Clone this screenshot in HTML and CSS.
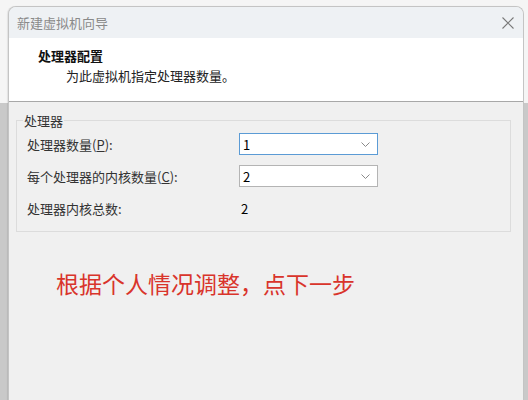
FILE: index.html
```html
<!DOCTYPE html>
<html lang="zh-CN">
<head>
<meta charset="utf-8">
<link rel="stylesheet" href="styles.css">
</head>
<body>
<div class="window">
  <div class="titlebar">
    <span class="title">新建虚拟机向导</span>
    <svg class="close" width="12" height="12" viewBox="0 0 12 12"><path d="M0.5 0.5L11.5 11.5M11.5 0.5L0.5 11.5" stroke="#7a7a7a" stroke-width="1.1" fill="none"/></svg>
  </div>
  <div class="header">
    <div class="h-title">处理器配置</div>
    <div class="h-sub">为此虚拟机指定处理器数量。</div>
  </div>
  <div class="content">
    <fieldset class="group">
      <legend>处理器</legend>
      <div class="row">
        <label class="lbl">处理器数量(<u>P</u>):</label>
        <div class="combo focus"><span>1</span><svg width="9" height="5" viewBox="0 0 9 5"><path d="M0.5 0.5L4.5 4.5L8.5 0.5" stroke="#8a8a8a" fill="none"/></svg></div>
      </div>
      <div class="row">
        <label class="lbl">每个处理器的内核数量(<u>C</u>):</label>
        <div class="combo"><span>2</span><svg width="9" height="5" viewBox="0 0 9 5"><path d="M0.5 0.5L4.5 4.5L8.5 0.5" stroke="#8a8a8a" fill="none"/></svg></div>
      </div>
      <div class="row total">
        <span class="lbl">处理器内核总数:</span>
        <span class="val">2</span>
      </div>
    </fieldset>
    <p class="note">根据个人情况调整，点下一步</p>
  </div>
</div>
</body>
</html>
```
FILE: styles.css
```css
html, body { margin: 0; padding: 0; }
body {
  width: 528px;
  height: 400px;
  overflow: hidden;
  background: linear-gradient(#f5f5f5 0 103px, #c9c9c9 103px);
  font-family: "Noto Sans CJK SC", "Noto Sans", sans-serif;
  padding: 6px 4px 0 8px;
  box-sizing: border-box;
}
.window {
  width: 516px;
  height: 400px;
  box-sizing: border-box;
  border: 1px solid #c4c4c4;
  border-bottom: none;
  border-radius: 8px 8px 0 0;
  background: #f0f0f0;
  overflow: hidden;
  box-shadow: -1px 0 1px rgba(0,0,0,0.08);
}
.titlebar {
  height: 31px;
  background: #eef1f4;
  display: flex;
  align-items: center;
  justify-content: space-between;
  padding: 0 9px 0 8px;
}
.title { font-size: 13px; color: #8a8a8a; line-height: 1; }
.close { margin-top: 1px; }
.header {
  height: 64px;
  background: #ffffff;
  border-bottom: 1px solid #a8a8a8;
  padding: 9px 0 0 29px;
  box-sizing: border-box;
}
.h-title { font-size: 13px; font-weight: bold; color: #111; line-height: 17px; }
.h-sub { font-size: 13px; color: #222; line-height: 17px; margin: 3px 0 0 28px; }
.content { padding: 12px 12px 0 7px; }
.group {
  margin: 0;
  border: 1px solid #dcdcdc;
  padding: 6px 0 11px 10px;
  height: 118px;
  box-sizing: border-box;
}
.group legend {
  font-size: 13px;
  color: #333;
  padding: 0 1px;
  margin-left: -4px;
  line-height: 13px;
}
.row {
  display: flex;
  align-items: center;
  height: 22px;
  margin-bottom: 10px;
}
.row.total { margin-top: 0; }
.lbl {
  width: 212px;
  font-size: 13px;
  color: #333;
}
.lbl u { text-decoration: underline; }
.combo {
  width: 139px;
  height: 22px;
  box-sizing: border-box;
  border: 1px solid #b4b4b4;
  background: #fff;
  display: flex;
  align-items: center;
  justify-content: space-between;
  padding: 0 7px 0 3px;
  font-size: 13px;
  color: #000;
}
.combo.focus { border-color: #5b9bd5; }
.val { font-size: 13px; color: #000; margin-left: 2px; }
.note {
  margin: 36px 0 0 40px;
  font-size: 23px;
  color: #d9342b;
  line-height: 30px;
}
```
